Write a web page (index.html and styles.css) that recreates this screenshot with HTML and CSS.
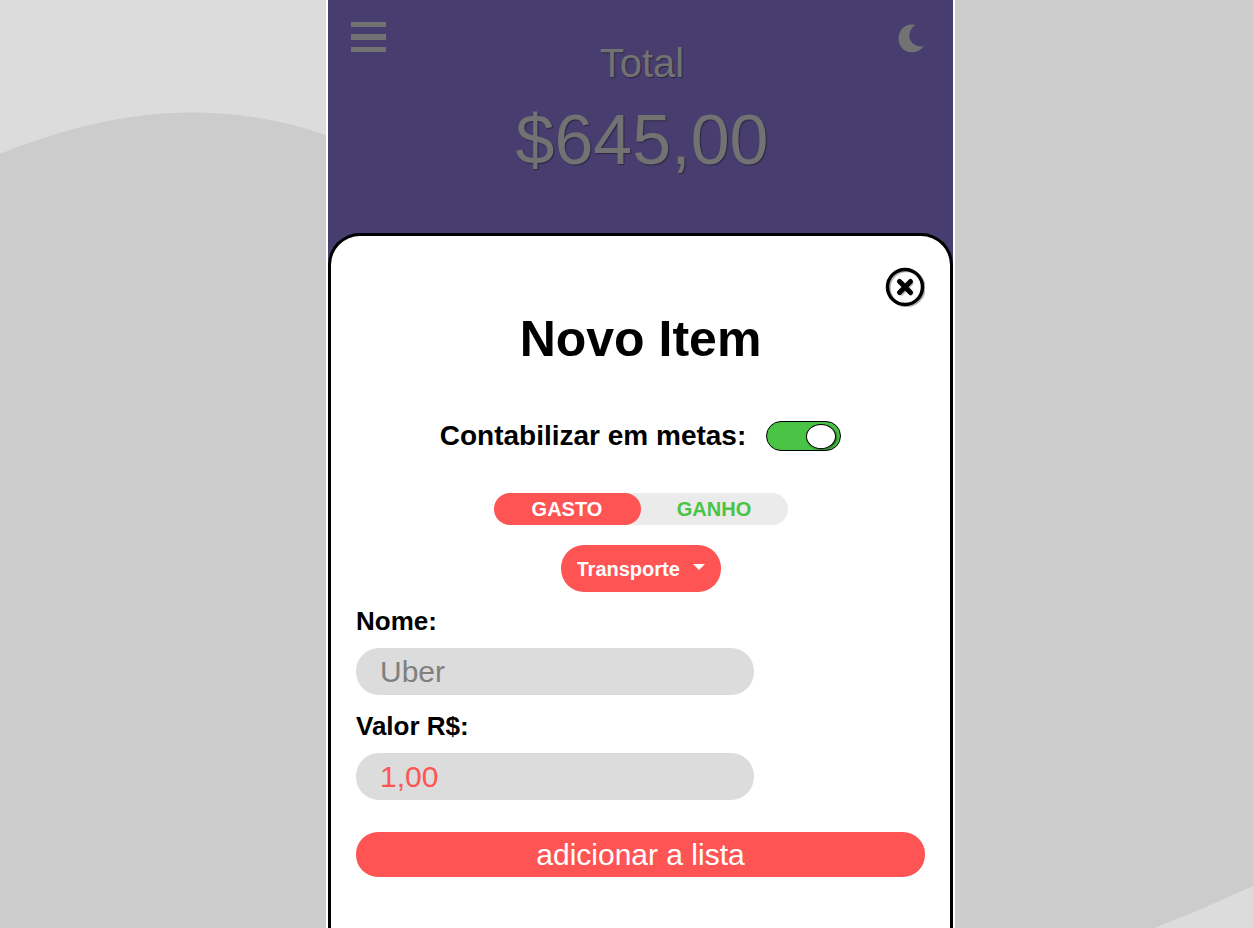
FILE: index.html
```html
<!DOCTYPE html>
<html lang="pt-BR">
<head>
<meta charset="utf-8">
<meta name="viewport" content="width=device-width, initial-scale=1">
<title>Novo Item</title>
<link rel="stylesheet" href="styles.css">
</head>
<body class="page">
  <svg class="backdrop" viewBox="0 0 1253 928" preserveAspectRatio="none" aria-hidden="true">
    <path fill="#cccccc" d="M0 154C66 127 130 112.500 190 112.500C240 112.500 285 120.500 326 135C480 190 560 0 700 0H1253V886Q1205 908 1155 928H0Z"/>
  </svg>
  <main class="app">
    <header class="summary">
      <button class="icon-button" type="button" aria-label="Menu">
        <svg width="35" height="30" viewBox="0 0 35 30" fill="#727272" aria-hidden="true">
          <path d="M0 0H35V5H0ZM0 12H35V18H0ZM0 25H35V30H0Z"/>
        </svg>
      </button>
      <div class="total">
        <p class="total-label">Total</p>
        <p class="total-value">$645,00</p>
      </div>
      <button class="icon-button" type="button" aria-label="Modo escuro">
        <svg width="28" height="32" viewBox="0 0 28 32" fill="#727272" aria-hidden="true">
          <path d="M17.500 3C9.500 7.500 9.500 19 16.500 22.500C19 24.300 22 24.800 26 24.200C23 28 18.500 30.300 13.500 30.300C6 30.300 .5 24 .5 16.500C.5 9 6 2.500 13 2.400Q15.500 2.300 17.500 3Z"/>
        </svg>
      </button>
    </header>
    <section class="sheet" aria-labelledby="sheet-title">
      <button class="icon-button close" type="button" aria-label="Fechar">
        <svg width="41" height="40" viewBox="0 0 41 40" fill="none" aria-hidden="true">
          <g stroke="#b4b4b4"><circle cx="22.500" cy="21" r="17.500" stroke-width="3.500"/><path d="M17.500 16L27 26M27 16L17.500 26" stroke-width="5" stroke-linecap="round"/></g>
          <g stroke="#000000"><circle cx="21" cy="20" r="17.500" stroke-width="3.500"/><path d="M15.500 14.500L26.500 25.500M26.500 14.500L15.500 25.500" stroke-width="5" stroke-linecap="round"/></g>
        </svg>
      </button>
      <h1 class="title" id="sheet-title">Novo Item</h1>
      <form class="form">
        <div class="goal">
          <label class="goal-label" for="goal">Contabilizar em metas:</label>
          <input class="switch" id="goal" type="checkbox" role="switch" checked>
        </div>
        <div class="segments" role="radiogroup" aria-label="Tipo">
          <label class="segment expense"><input class="segment-input" type="radio" name="kind" checked>GASTO</label>
          <label class="segment income"><input class="segment-input" type="radio" name="kind">GANHO</label>
        </div>
        <div class="category">
          <select class="category-select" aria-label="Categoria">
            <option>Transporte</option>
          </select>
          <svg class="caret" width="12" height="6" viewBox="0 0 12 6" fill="#ffffff" aria-hidden="true"><path d="M0 0H12L6 6Z"/></svg>
        </div>
        <div class="fields">
          <div class="field">
            <label class="field-label" for="name">Nome:</label>
            <input class="field-input" id="name" type="text" placeholder="Uber">
          </div>
          <div class="field">
            <label class="field-label" for="value">Valor R$:</label>
            <input class="field-input amount" id="value" type="text" inputmode="decimal" value="1,00">
          </div>
        </div>
        <button class="submit" type="button">adicionar a lista</button>
      </form>
    </section>
  </main>
</body>
</html>
```
FILE: styles.css
```css
*,
*::before {
  box-sizing: border-box;
}

.page {
  display: grid;
  grid-template-columns: 326fr 629fr 298fr;
  grid-template-rows: minmax(100vh, auto);
  margin: 0;
  background: #dcdcdc;
  color: #000000;
  font-family: "Liberation Sans", Arial, sans-serif;
}

.backdrop {
  grid-area: 1 / 1 / 2 / 4;
  width: 100%;
  height: 100%;
}

.app {
  grid-area: 1 / 2 / 2 / 3;
  z-index: 1;
  display: flex;
  flex-direction: column;
  min-width: 0;
  border: solid #ffffff;
  border-width: 0 2px;
  background: #483d6f;
}

.summary {
  display: flex;
  align-items: flex-start;
  justify-content: space-between;
  padding: 22px 27px 53px 23px;
}

.icon-button {
  display: flex;
  padding: 0;
  border: 0;
  background: none;
  cursor: pointer;
}

.total {
  padding-top: 18px;
  color: #727272;
  text-align: center;
  text-shadow: 1px 1px 1px rgba(0, 0, 0, 0.4);
}

.total-label {
  margin: 0;
  font-size: 40px;
  line-height: 46px;
}

.total-value {
  margin: 14px 0 0;
  font-size: 70px;
  line-height: 80px;
}

.sheet {
  display: flex;
  flex: 1;
  flex-direction: column;
  padding: 31px 25px 51px;
  border: 3px solid #000000;
  border-bottom: 0;
  border-radius: 32px 32px 0 0;
  background: #ffffff;
}

.close {
  align-self: flex-end;
}

.title {
  margin: 3px 0 53px;
  font-size: 50px;
  line-height: 58px;
  text-align: center;
}

.form {
  display: flex;
  flex-direction: column;
  align-items: center;
}

.goal {
  display: flex;
  align-items: center;
  gap: 20px;
}

.goal-label {
  font-size: 28px;
  font-weight: bold;
  line-height: 30px;
}

.switch {
  display: flex;
  align-items: center;
  width: 75px;
  height: 30px;
  margin: 0;
  padding: 0 4px;
  border: 1px solid #000000;
  border-radius: 15px;
  background: #cccccc;
  appearance: none;
  cursor: pointer;
}

.switch::before {
  width: 30px;
  height: 25px;
  border: 1px solid #000000;
  border-radius: 50%;
  background: #ffffff;
  box-shadow: 1px 1px 2px rgba(0, 0, 0, 0.5);
  content: "";
}

.switch:checked {
  justify-content: flex-end;
  background: #49c445;
}

.segments {
  display: flex;
  margin: 42px 0 20px;
  border-radius: 16px;
  background: #ebebeb;
}

.segment {
  display: flex;
  align-items: center;
  justify-content: center;
  width: 147px;
  height: 32px;
  border-radius: 16px;
  font-size: 20px;
  font-weight: bold;
  cursor: pointer;
}

.segment-input {
  width: 0;
  height: 0;
  margin: 0;
  appearance: none;
}

.expense {
  color: #ff5454;
}

.income {
  color: #49c445;
}

.expense:has(:checked) {
  background: #ff5454;
  color: #ffffff;
}

.income:has(:checked) {
  background: #49c445;
  color: #ffffff;
}

.category {
  display: grid;
  align-items: center;
}

.category-select {
  grid-area: 1 / 1;
  height: 47px;
  padding: 0 40px 0 16px;
  border: 0;
  border-radius: 23px;
  background: #ff5454;
  color: #ffffff;
  font: bold 20px "Liberation Sans", Arial, sans-serif;
  appearance: none;
}

.caret {
  grid-area: 1 / 1;
  justify-self: end;
  margin: 0 16px 4px 0;
  pointer-events: none;
}

.fields {
  display: flex;
  flex-direction: column;
  gap: 16px;
  width: 100%;
  margin: 14px 0 32px;
}

.field {
  display: flex;
  flex-direction: column;
  gap: 12px;
}

.field-label {
  font-size: 26px;
  font-weight: bold;
  line-height: 30px;
}

.field-input {
  width: 70%;
  height: 47px;
  padding: 0 24px;
  border: 0;
  border-radius: 23px;
  background: #dcdcdc;
  color: #808080;
  font: 30px "Liberation Sans", Arial, sans-serif;
}

.field-input::placeholder {
  color: #808080;
  opacity: 1;
}

.amount {
  color: #ff5454;
}

.submit {
  width: 100%;
  height: 45px;
  padding: 0;
  border: 0;
  border-radius: 22px;
  background: #ff5454;
  color: #ffffff;
  font: 30px "Liberation Sans", Arial, sans-serif;
  cursor: pointer;
}
```
